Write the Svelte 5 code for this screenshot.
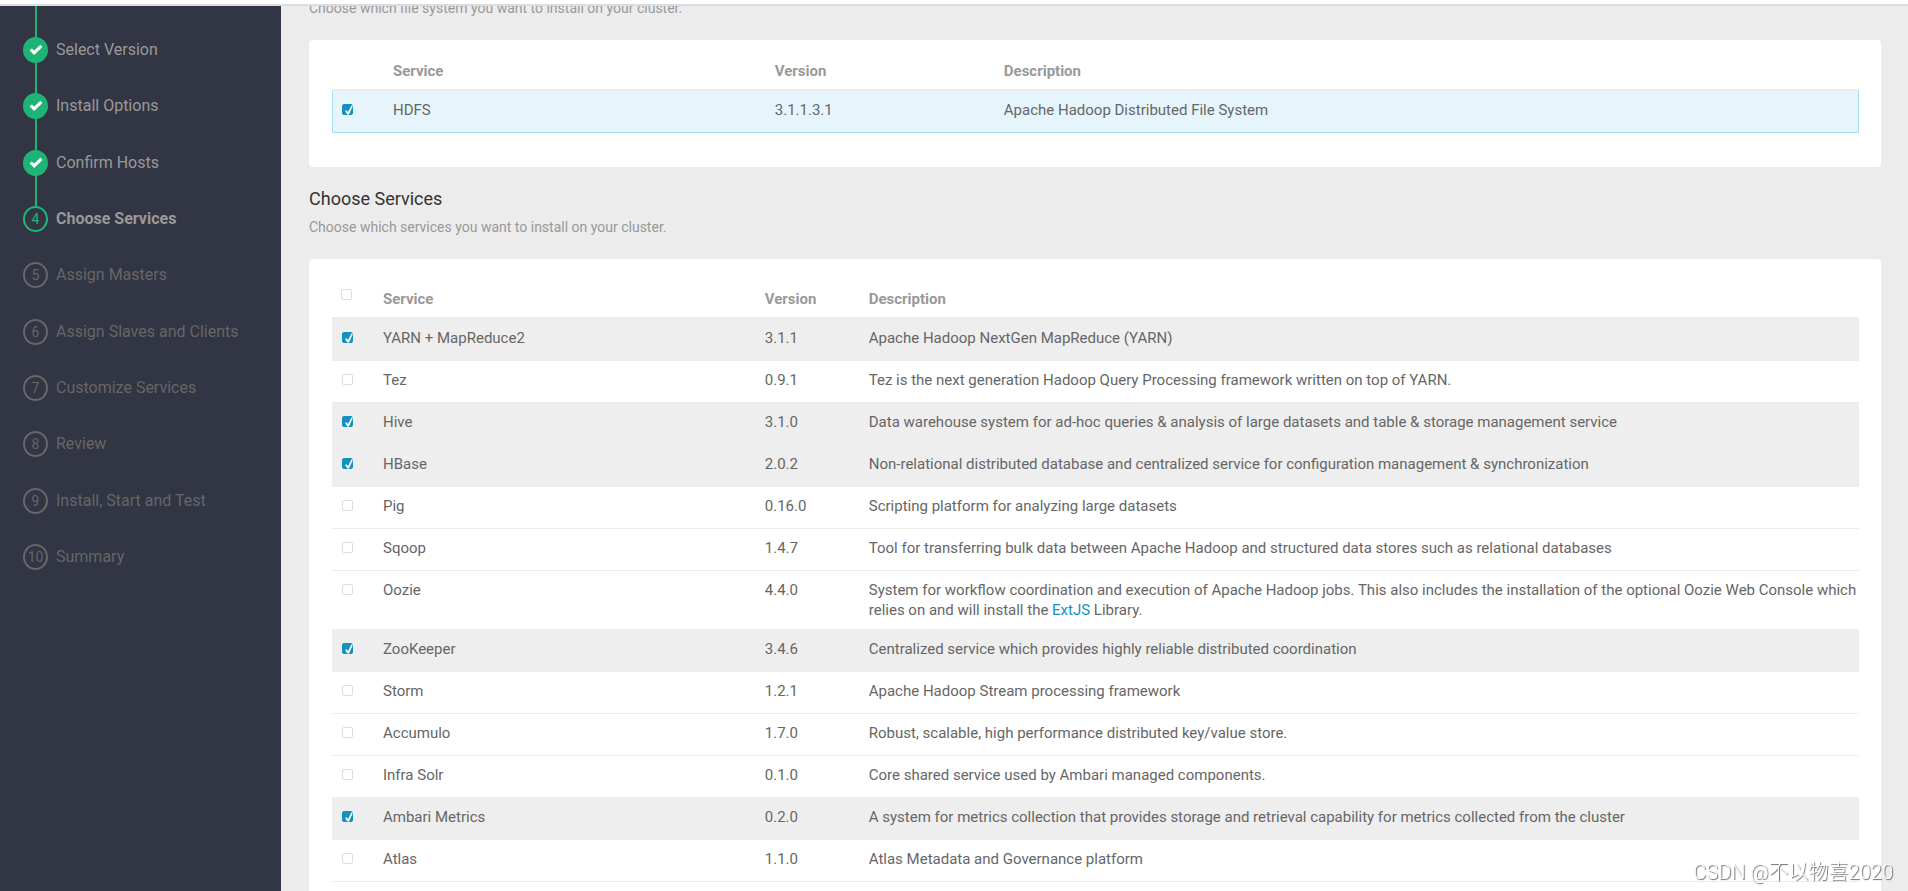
<script lang="ts">
    type Service = {
        name: string;
        version: string;
        description: string;
        link?: { text: string; href: string; after: string };
        selected: boolean;
    };

    const currentStep = 4;
    const steps = [
        { number: 1, label: 'Select Version' },
        { number: 2, label: 'Install Options' },
        { number: 3, label: 'Confirm Hosts' },
        { number: 4, label: 'Choose Services' },
        { number: 5, label: 'Assign Masters' },
        { number: 6, label: 'Assign Slaves and Clients' },
        { number: 7, label: 'Customize Services' },
        { number: 8, label: 'Review' },
        { number: 9, label: 'Install, Start and Test' },
        { number: 10, label: 'Summary' }
    ];

    let fileSystems: Service[] = $state([
        { name: 'HDFS', version: '3.1.1.3.1', description: 'Apache Hadoop Distributed File System', selected: true }
    ]);

    let services: Service[] = $state([
        { name: 'YARN + MapReduce2', version: '3.1.1', description: 'Apache Hadoop NextGen MapReduce (YARN)', selected: true },
        { name: 'Tez', version: '0.9.1', description: 'Tez is the next generation Hadoop Query Processing framework written on top of YARN.', selected: false },
        { name: 'Hive', version: '3.1.0', description: 'Data warehouse system for ad-hoc queries & analysis of large datasets and table & storage management service', selected: true },
        { name: 'HBase', version: '2.0.2', description: 'Non-relational distributed database and centralized service for configuration management & synchronization', selected: true },
        { name: 'Pig', version: '0.16.0', description: 'Scripting platform for analyzing large datasets', selected: false },
        { name: 'Sqoop', version: '1.4.7', description: 'Tool for transferring bulk data between Apache Hadoop and structured data stores such as relational databases', selected: false },
        {
            name: 'Oozie',
            version: '4.4.0',
            description: 'System for workflow coordination and execution of Apache Hadoop jobs. This also includes the installation of the optional Oozie Web Console which relies on and will install the ',
            link: { text: 'ExtJS', href: '#extjs', after: ' Library.' },
            selected: false
        },
        { name: 'ZooKeeper', version: '3.4.6', description: 'Centralized service which provides highly reliable distributed coordination', selected: true },
        { name: 'Storm', version: '1.2.1', description: 'Apache Hadoop Stream processing framework', selected: false },
        { name: 'Accumulo', version: '1.7.0', description: 'Robust, scalable, high performance distributed key/value store.', selected: false },
        { name: 'Infra Solr', version: '0.1.0', description: 'Core shared service used by Ambari managed components.', selected: false },
        { name: 'Ambari Metrics', version: '0.2.0', description: 'A system for metrics collection that provides storage and retrieval capability for metrics collected from the cluster', selected: true },
        { name: 'Atlas', version: '1.1.0', description: 'Atlas Metadata and Governance platform', selected: false }
    ]);

    const allSelected = $derived(services.every((s) => s.selected));

    function toggleAll() {
        const next = !allSelected;
        for (const service of services) service.selected = next;
    }
</script>

{#snippet tick()}
    <svg class="tick" viewBox="0 0 11 11" aria-hidden="true">
        <path d="M3 7 4.4 6.2 6 8 9.6 1.2 11 1.6 7 10.4 5.4 10.4Z" fill="#fff" />
    </svg>
{/snippet}

{#snippet row(service: Service)}
    <tr class:selected={service.selected}>
        <td class="pick">
            <label class="checkbox">
                <input type="checkbox" aria-label={service.name} bind:checked={service.selected} />
                {@render tick()}
            </label>
        </td>
        <td>{service.name}</td>
        <td>{service.version}</td>
        <td class="description">
            {service.description}{#if service.link}<a href={service.link.href}>{service.link.text}</a>{service.link.after}{/if}
        </td>
    </tr>
{/snippet}

<div class="page">
    <div class="topbar"></div>

    <div class="wizard">
        <nav>
            <ol>
                {#each steps as step}
                    <li class:done={step.number < currentStep} class:active={step.number === currentStep}>
                        <span class="badge">
                            {#if step.number < currentStep}
                                <svg viewBox="0 0 14 12" width="14" height="12" aria-hidden="true">
                                    <path d="M.6 6.6 2.8 4.4 5.2 6.6 11.4 .8 13.4 3 5.2 11Z" fill="#fff" />
                                </svg>
                            {:else}
                                {step.number}
                            {/if}
                        </span>
                        <span>{step.label}</span>
                    </li>
                {/each}
            </ol>
        </nav>

        <main>
            <p class="hint first">Choose which file system you want to install on your cluster.</p>
            <section class="panel">
                <table class="file-systems">
                    <thead>
                        <tr>
                            <th class="pick"></th>
                            <th class="name">Service</th>
                            <th class="version">Version</th>
                            <th>Description</th>
                        </tr>
                    </thead>
                    <tbody>
                        {#each fileSystems as service}
                            {@render row(service)}
                        {/each}
                    </tbody>
                </table>
            </section>

            <h4>Choose Services</h4>
            <p class="hint">Choose which services you want to install on your cluster.</p>
            <section class="panel grow">
                <table class="services">
                    <thead>
                        <tr>
                            <th class="pick">
                                <label class="checkbox">
                                    <input type="checkbox" aria-label="Select all" checked={allSelected} onchange={toggleAll} />
                                    {@render tick()}
                                </label>
                            </th>
                            <th class="name">Service</th>
                            <th class="version">Version</th>
                            <th>Description</th>
                        </tr>
                    </thead>
                    <tbody>
                        {#each services as service}
                            {@render row(service)}
                        {/each}
                    </tbody>
                </table>
            </section>
        </main>
    </div>

    <div class="watermark">CSDN @不以物喜2020</div>
</div>

<style>
    :global(body) {
        background: #ececec;
    }

    .page {
        display: flex;
        flex-direction: column;
        min-height: 100vh;
        font-family: Roboto, "Noto Sans CJK SC", sans-serif;
        font-size: 14px;
        line-height: 20px;
        color: #666;
    }

    .topbar {
        height: 4px;
        background: #fff;
        border-bottom: 2px solid #dddde1;
    }

    .wizard {
        display: flex;
        flex: 1;
    }

    nav {
        flex: 0 0 281px;
        overflow: hidden;
        background: #323544;
    }

    ol {
        display: grid;
        grid-auto-rows: 1fr;
        height: 563px;
        margin: 0;
        padding: 16px 0 0 23px;
        list-style: none;
        font-size: 16px;
    }

    li {
        position: relative;
        display: flex;
        align-items: center;
        gap: 8px;
        color: #666;
    }

    li.done,
    li.active {
        color: #999;
    }

    li.active {
        font-weight: 700;
    }

    /* connector running up to the previous step */
    li.done::before,
    li.active::before {
        content: "";
        position: absolute;
        left: 12px;
        bottom: 50%;
        width: 2px;
        height: 100%;
        background: #1eb475;
    }

    .badge {
        position: relative;
        z-index: 1;
        display: flex;
        align-items: center;
        justify-content: center;
        box-sizing: border-box;
        width: 25px;
        height: 26px;
        border: 2px solid #666;
        border-radius: 50%;
        background: #323544;
        font-size: 14px;
        font-weight: 400;
    }

    .done .badge {
        border-color: #1eb475;
        background: #1eb475;
    }

    .active .badge {
        border-color: #1eb475;
        color: #1eb475;
    }

    main {
        display: flex;
        flex: 1;
        flex-direction: column;
        min-width: 0;
        overflow: hidden;
        padding: 0 27px 0 28px;
    }

    h4 {
        margin: 22px 0 8px;
        font-size: 18px;
        font-weight: 400;
        line-height: 20px;
        color: #333;
    }

    .hint {
        margin: 0 0 22px;
        color: #999;
    }

    .hint.first {
        margin-top: -8px;
    }

    .panel {
        padding: 10px 22px 34px 23px;
        border-radius: 4px;
        background: #fff;
    }

    .grow {
        flex: 1;
        padding: 19px 22px 0 23px;
        border-radius: 4px 4px 0 0;
    }

    table {
        width: 100%;
        border-collapse: separate;
        border-spacing: 0;
        table-layout: fixed;
        font-size: 15px;
    }

    th,
    td {
        box-sizing: border-box;
        padding: 9px 10px;
        text-align: left;
        border-bottom: 1px solid #ececec;
    }

    th {
        height: 41px;
        padding: 10px 10px 8px;
        border-bottom-width: 2px;
        vertical-align: bottom;
        font-weight: 700;
        color: #999;
    }

    td {
        height: 42px;
        vertical-align: top;
    }

    .description {
        padding-right: 0;
    }

    .name {
        width: 25%;
    }

    .file-systems .pick {
        width: 51px;
    }

    .file-systems .version {
        width: 15%;
    }

    .file-systems td {
        border-color: #a7dff2;
    }

    .file-systems td:first-child {
        border-left: 1px solid #a7dff2;
    }

    .file-systems td:last-child {
        border-right: 1px solid #a7dff2;
    }

    .file-systems .selected {
        background: #e6f5fc;
    }

    .services .pick {
        width: 41px;
    }

    .services .version {
        width: 104px;
    }

    .services th.pick {
        padding: 11px 9px;
        vertical-align: top;
    }

    .services .selected {
        background: #eee;
    }

    td.pick {
        padding: 13px 10px;
    }

    .file-systems td.pick {
        padding-left: 9px;
    }

    .checkbox {
        display: grid;
        width: 11px;
        height: 11px;
    }

    .checkbox input {
        grid-area: 1 / 1;
        appearance: none;
        box-sizing: border-box;
        width: 11px;
        height: 11px;
        margin: 0;
        border: 1px solid #ddd;
        border-radius: 2px;
        background: #fff;
    }

    .checkbox input:checked {
        border-color: #1491c1;
        background: #1491c1;
    }

    .tick {
        grid-area: 1 / 1;
        z-index: 1;
        width: 11px;
        height: 11px;
        visibility: hidden;
        pointer-events: none;
    }

    input:checked + .tick {
        visibility: visible;
    }

    a {
        color: #1491c1;
        text-decoration: none;
    }

    .watermark {
        position: fixed;
        right: 15px;
        bottom: 8px;
        font-size: 20px;
        font-weight: 300;
        line-height: 22px;
        color: #fff;
        text-shadow: 1px 1px 1px #666;
    }
</style>
